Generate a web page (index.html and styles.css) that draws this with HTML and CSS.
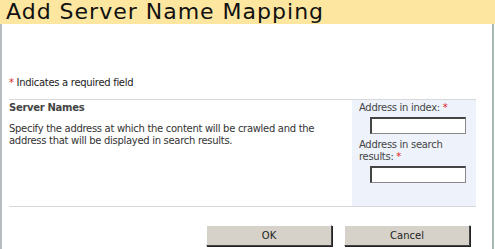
FILE: index.html
```html
<!DOCTYPE html>
<html>
<head>
<meta charset="utf-8">
<link rel="stylesheet" href="styles.css">
</head>
<body>
<div class="dialog">
  <div class="title">Add Server Name Mapping</div>
  <div class="content">
    <div class="req"><span class="star">*</span> Indicates a required field</div>
    <div class="section">
      <div class="desc">
        <div class="head">Server Names</div>
        <div class="text">Specify the address at which the content will be crawled and the address that will be displayed in search results.</div>
      </div>
      <div class="fields">
        <div class="label">Address in index: <span class="star">*</span></div>
        <input class="field" type="text">
        <div class="label">Address in search<br>results: <span class="star">*</span></div>
        <input class="field" type="text">
      </div>
    </div>
    <div class="buttons">
      <button class="btn">OK</button>
      <button class="btn">Cancel</button>
    </div>
  </div>
</div>
</body>
</html>
```
FILE: styles.css
```css
html, body { margin: 0; padding: 0; background: #fff; }
.dialog {
  width: 495px; height: 249px; box-sizing: border-box;
  display: flex; flex-direction: column;
  font-family: "DejaVu Sans", Verdana, sans-serif;
}
.title {
  height: 24px; background: #fde6a0; color: #111;
  font-size: 22px; letter-spacing: 1px; line-height: 24px; padding-left: 6px;
  white-space: nowrap; overflow: hidden;
}
.content {
  flex: 1; border-left: 2px solid #b8bcc0; border-right: 2px solid #a8b8b0;
  margin-right: 1px; padding: 0 16px 0 7px;
  display: flex; flex-direction: column;
}
.req { font-size: 10px; margin-top: 53px; height: 22px; color: #222; letter-spacing: -0.3px; }
.star { color: #e21a1a; }
.section { display: flex; border-top: 1px solid #d8d8d8; border-bottom: 1px solid #d8d8d8; height: 106px; }
.desc { flex: 1; padding-top: 2px; font-size: 10px; color: #333; letter-spacing: -0.3px; }
.head { font-weight: bold; color: #444; margin-bottom: 10px; }
.text { line-height: 12px; width: 320px; }
.fields { width: 117px; background: #eef3fb; padding: 2px 0 0 7px; font-size: 10px; color: #444; letter-spacing: -0.3px; }
.label { line-height: 12px; width: 105px; }
.field { display: block; box-sizing: border-box; width: 96px; height: 17px; margin: 3px 0 5px 11px; border: 1px solid #888; border-top: 2px solid #444; border-left: 2px solid #444; background: #fff; padding: 0; }
.buttons { display: flex; justify-content: flex-end; gap: 12px; margin-top: 18px; padding-right: 6px; }
.btn { width: 126px; height: 21px; background: #d6d2ca; border: 1px solid #444; border-top-color: #fff; border-left-color: #fff; box-shadow: 1px 1px 0 #222; font-family: "DejaVu Sans", sans-serif; font-size: 10px; color: #222; padding: 0; }
```
